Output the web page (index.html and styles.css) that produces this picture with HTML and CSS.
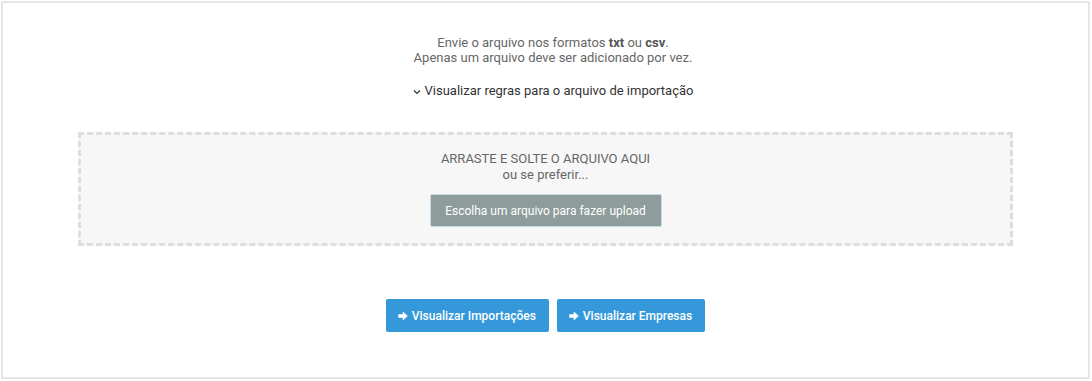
FILE: index.html
```html
<!DOCTYPE html>
<html lang="pt-BR">
<head>
<meta charset="utf-8">
<link rel="stylesheet" href="styles.css">
</head>
<body>
<div class="card">
  <div class="intro">
    <p>Envie o arquivo nos formatos <b>txt</b> ou <b>csv</b>.<br>Apenas um arquivo deve ser adicionado por vez.</p>
  </div>
  <div class="rules">
    <svg class="chev" width="8" height="6" viewBox="0 0 8 6"><path d="M1 1.5 L4 4.5 L7 1.5" fill="none" stroke="#333" stroke-width="1.2"/></svg>
    <span>Visualizar regras para o arquivo de importação</span>
  </div>
  <div class="drop">
    <div class="drop-title">ARRASTE E SOLTE O ARQUIVO AQUI</div>
    <div class="drop-sub">ou se preferir...</div>
    <button class="upload">Escolha um arquivo para fazer upload</button>
  </div>
  <div class="actions">
    <button class="btn"><svg class="arrow" width="10" height="10" viewBox="0 0 10 10"><path fill="#fff" stroke="#fff" stroke-width="0.6" stroke-linejoin="round" d="M0.6 3.6 H5 V1 L9.4 5 L5 9 V6.4 H0.6 Z"/></svg>Visualizar Importações</button>
    <button class="btn"><svg class="arrow" width="10" height="10" viewBox="0 0 10 10"><path fill="#fff" stroke="#fff" stroke-width="0.6" stroke-linejoin="round" d="M0.6 3.6 H5 V1 L9.4 5 L5 9 V6.4 H0.6 Z"/></svg>Visualizar Empresas</button>
  </div>
</div>
</body>
</html>
```
FILE: styles.css
```css
* { box-sizing: border-box; }
html, body { margin: 0; background: #fff; }
body {
  padding: 1px 2px 2px 1px;
  font-family: Roboto, "Liberation Sans", sans-serif;
  font-size: 13px;
  color: #666;
}
.card {
  border: 2px solid #e6e6e6;
  height: 378px;
  padding: 32px 75px 0 75px;
  display: flex;
  flex-direction: column;
  align-items: center;
}
.intro {
  padding-left: 15px;
}
.intro p {
  margin: 0;
  text-align: center;
  line-height: 15px;
}
.intro b { color: #555; font-weight: 700; }
.rules {
  margin-top: 18px;
  padding-left: 15px;
  color: #333;
  display: flex;
  align-items: center;
  gap: 4px;
  line-height: 16px;
}
.chev { margin-top: 1px; }
.drop {
  margin-top: 33px;
  align-self: stretch;
  height: 114px;
  border: 3px dashed #dedede;
  background: #f7f7f7;
  display: flex;
  flex-direction: column;
  align-items: center;
  padding-top: 16px;
}
.drop-title, .drop-sub { line-height: 16px; color: #666; }
.upload {
  margin-top: 11px;
  height: 33px;
  width: 232px;
  background: #8e9c9b;
  border: 1px solid #c7d6e8;
  border-radius: 2px;
  color: #fff;
  font-family: inherit;
  font-size: 12px;
  padding: 0;
}
.actions {
  margin-top: 53px;
  display: flex;
  gap: 8px;
}
.btn {
  height: 33px;
  background: #3498db;
  border: none;
  border-radius: 2px;
  color: #fff;
  font-family: inherit;
  font-size: 12px;
  font-weight: 500;
  padding: 0 13px 0 12px;
  display: flex;
  align-items: center;
  gap: 4px;
}
.arrow { display: block; }
```
